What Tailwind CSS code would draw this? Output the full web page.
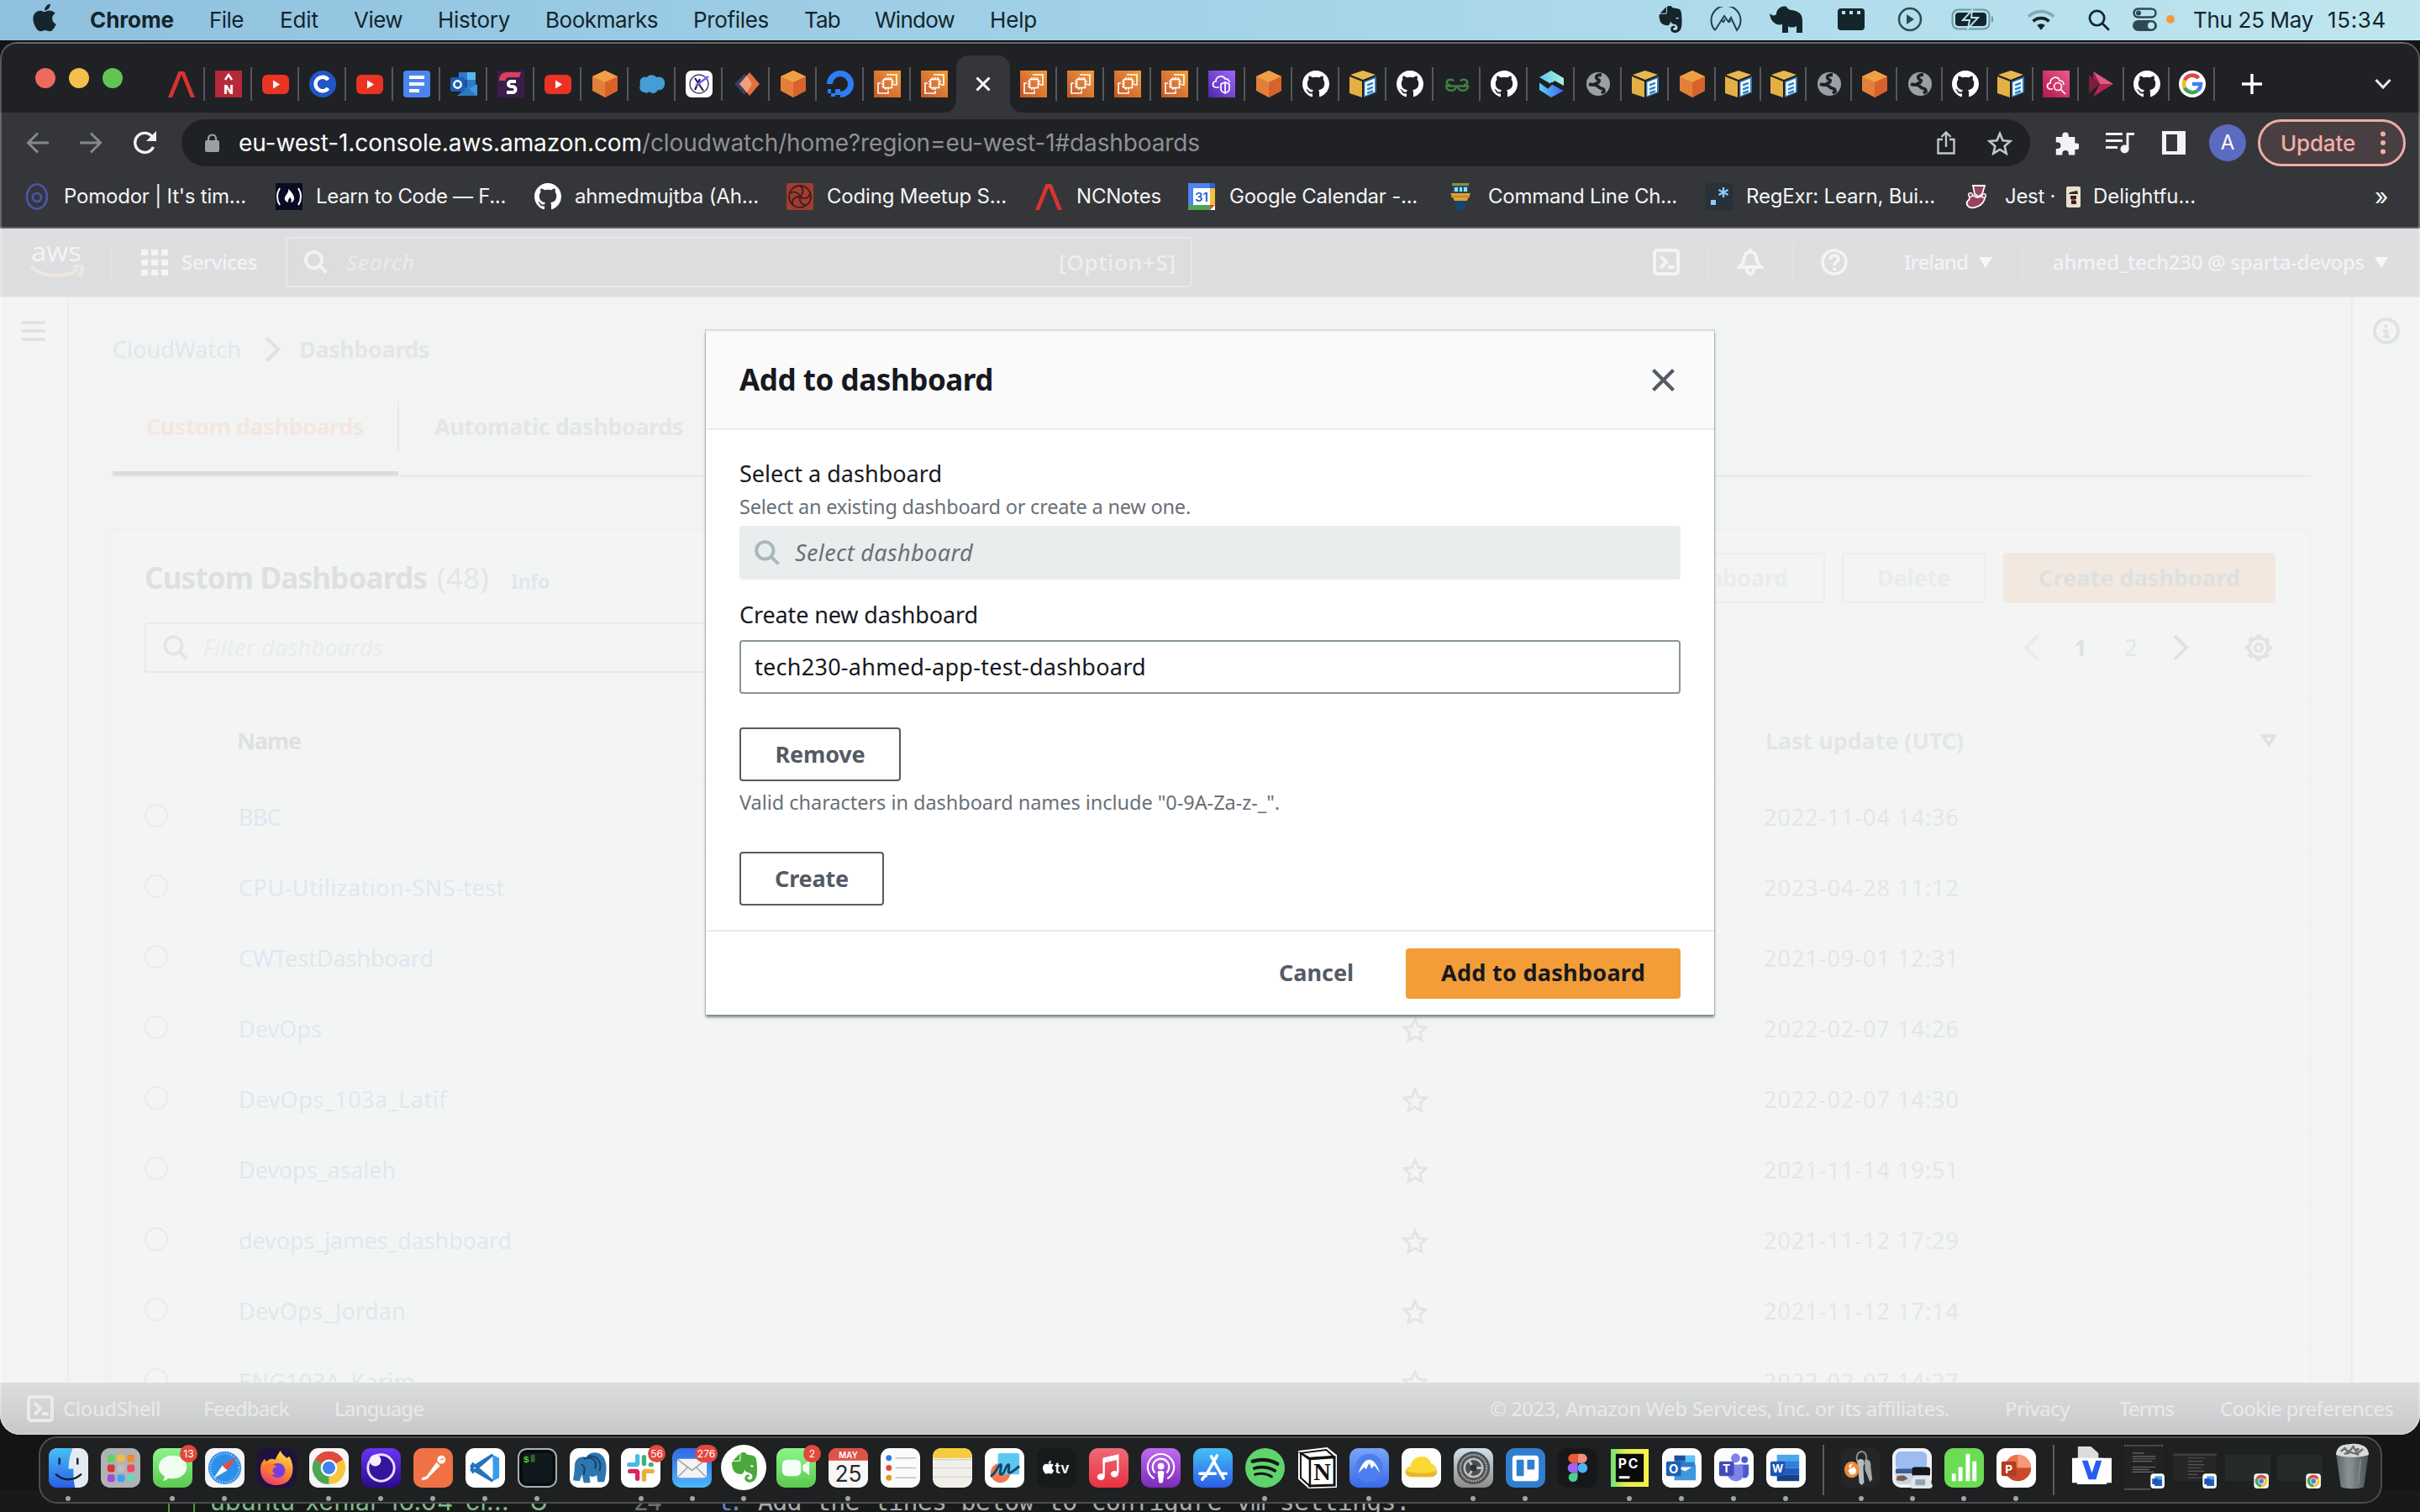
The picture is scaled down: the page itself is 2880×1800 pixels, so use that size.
<!DOCTYPE html>
<html lang="en">
<head>
<meta charset="utf-8">
<title>CloudWatch Dashboards</title>
<script src="https://cdn.jsdelivr.net/npm/@tailwindcss/browser@4"></script>
</head>
<body class="bg-[#131415] whitespace-nowrap">
<div class="relative w-[2880px] h-[1800px] overflow-hidden flex flex-col bg-[#131415] font-['Inter',sans-serif]">

  <!-- editor window behind the dock -->
  <div class="absolute left-0 bottom-0 w-full h-[26px] flex items-center text-[30px] font-['DejaVu_Sans_Mono',monospace] bg-[#181919]">
    <div class="ml-[200px] w-[32px] h-[26px] mt-2 border-2 border-[#4d9a3f]"></div>
    <span data-fit class="ml-[18px] w-[356px] text-[#7dbb8d] font-['Inter',sans-serif]">ubuntu-xenial-16.04-cl...</span>
    <span class="ml-[24px] w-[22px] text-[#7dbb8d] font-['Inter',sans-serif]">U</span>
    <span data-fit class="ml-[102px] w-[32px] text-[#6b6f76]">24</span>
    <span data-fit class="ml-[68px] w-[26px] text-[#5f86c4]">t.</span>
    <span data-fit class="ml-[22px] w-[776px] text-[#a9abad]">Add the lines below to configure vm settings:</span>
  </div>

  <!-- menu bar -->
  <header class="relative h-[48px] pb-[2px] flex items-center text-[26px] text-[#14252c] bg-linear-to-r from-[#8fc1df] via-[#a3d3e8] to-[#bfe6ef]">
    <svg class="ml-[39px] w-[28px] h-[34px] -mt-1" viewBox="0 20 384 470" fill="#14252c"><path d="M318.7 268.7c-.2-36.7 16.4-64.4 50-84.8-18.8-26.9-47.2-41.7-84.7-44.6-35.5-2.8-74.3 20.7-88.5 20.7-15 0-49.4-19.7-76.4-19.7C63.3 141.2 4 184.8 4 273.5q0 39.3 14.4 81.2c12.8 36.7 59 126.7 107.2 125.2 25.2-.6 43-17.9 75.8-17.9 31.8 0 48.3 17.9 76.4 17.9 48.6-.7 90.4-82.5 102.6-119.3-65.2-30.7-61.7-90-61.7-91.9zm-56.6-164.2c27.3-32.4 24.8-61.9 24-72.5-24.1 1.4-52 16.4-67.9 34.9-17.5 19.8-27.8 44.3-25.6 71.9 26.1 2 49.9-11.4 69.5-34.3z"/></svg>
    <span data-fit class="ml-[40px] w-[100px] font-bold">Chrome</span>
    <span data-fit class="ml-[42px] w-[41px]">File</span>
    <span data-fit class="ml-[43px] w-[46px]">Edit</span>
    <span data-fit class="ml-[42px] w-[58px]">View</span>
    <span data-fit class="ml-[42px] w-[86px]">History</span>
    <span data-fit class="ml-[42px] w-[134px]">Bookmarks</span>
    <span data-fit class="ml-[42px] w-[90px]">Profiles</span>
    <span data-fit class="ml-[42px] w-[43px]">Tab</span>
    <span data-fit class="ml-[41px] w-[95px]">Window</span>
    <span data-fit class="ml-[42px] w-[56px]">Help</span>
    <svg class="ml-[738px] w-[32px] h-[32px]" viewBox="0 0 24 24" fill="#14252c"><use href="#evernote"/></svg>
    <svg class="ml-[31px] w-[38px] h-[30px]" viewBox="0 0 38 30" fill="none" stroke="#24434e" stroke-width="2"><path d="M6 28A17.500 17.500 0 1 1 32 28L25 13l-3 5-5-7L6 28M13 16l3 2 2-3M22 18l3-1"/></svg>
    <svg class="ml-[32px] w-[42px] h-[34px]" viewBox="0 0 42 34" fill="#14252c"><path d="M1 10c3 3 6 3 8 1C9 5 15 0 21 2c2 3 4 4 6 4 8 1 13 4 13 12v15h-7v-8c-3 2-8 2-10 0v8h-7V23c-8 2-14-4-15-13z"/></svg>
    <svg class="ml-[40px] w-[32px] h-[26px]" viewBox="0 0 32 26"><rect width="32" height="26" rx="4" fill="#14252c"/><path d="M5 3h4v4H5zM14 3h4v4h-4zM23 3h4v4h-4z" fill="#b4deeb"/></svg>
    <svg class="ml-[39px] w-[30px] h-[30px]" viewBox="0 0 30 30"><circle cx="15" cy="15" r="13" fill="none" stroke="#2d4a54" stroke-width="2.500"/><path d="M11 9l9 6-9 6z" fill="#2d4a54"/></svg>
    <svg class="ml-[34px] w-[52px] h-[26px]" viewBox="0 0 52 26"><rect x="1.500" y="1.500" width="44" height="23" rx="7" fill="none" stroke="#6e96a4" stroke-width="2"/><rect x="5" y="5" width="37" height="16" rx="4" fill="#14252c"/><path d="M25 2L14 14h8l-2 10 12-13h-8z" fill="#14252c" stroke="#b8e2ed" stroke-width="2"/><path d="M48 9c3 1 3 7 0 8z" fill="#6e96a4"/></svg>
    <svg class="ml-[38px] w-[34px] h-[25px]" viewBox="0 0 36 26" fill="none" stroke-width="4"><path d="M2 9a23 23 0 0 1 32 0" stroke="#7fabb9"/><path d="M8 15a14.500 14.500 0 0 1 20 0" stroke="#14252c"/><path d="M18 26l-5-6a7 7 0 0 1 10 0z" fill="#14252c" stroke="none"/></svg>
    <svg class="ml-[38px] w-[27px] h-[27px]" viewBox="0 0 28 28" fill="none" stroke="#14252c" stroke-width="2.800" stroke-linecap="round"><circle cx="12" cy="12" r="9"/><path d="M19 19l7 7"/></svg>
    <svg class="ml-[27px] w-[30px] h-[28px]" viewBox="0 0 30 28"><rect x="1.500" y="1.500" width="26" height="10" rx="5" fill="none" stroke="#2d4a54" stroke-width="2.500"/><circle cx="7" cy="6.500" r="3" fill="#2d4a54"/><rect y="15" width="29" height="13" rx="6.500" fill="#2d4a54"/><circle cx="22" cy="21.500" r="4" fill="#bce4ee"/></svg>
    <i class="ml-[10px] w-[10px] h-[10px] rounded-full bg-[#f19a38]"></i>
    <span data-fit class="ml-[22px] w-[143px]">Thu 25 May</span>
    <span data-fit class="ml-[17px] w-[70px]">15:34</span>
  </header>

  <!-- browser window -->
  <div class="relative mt-[2px] h-[1658px] rounded-t-[20px] rounded-b-[24px] overflow-hidden bg-[#35363a]">
    <div class="mt-[2px] h-[82px] pt-[14px] bg-[#202124] flex items-center">
      <div class="self-start mt-[15px] ml-[42px] flex gap-[16px]">
        <i class="w-[24px] h-[24px] rounded-full bg-[#ec6a5e]"></i><i class="w-[24px] h-[24px] rounded-full bg-[#f4bf4f]"></i><i class="w-[24px] h-[24px] rounded-full bg-[#61c554]"></i>
      </div>
      <div id="tabs" class="ml-[42px] flex items-center h-full"></div>
      <svg class="ml-[32px] w-[24px] h-[24px]" viewBox="0 0 24 24" stroke="#fff" stroke-width="3.400"><path d="M12 0v24M0 12h24"/></svg>
      <svg class="ml-[134px] w-[20px] h-[14px]" viewBox="0 0 20 14" fill="none" stroke="#e8eaed" stroke-width="3"><path d="M1.500 2l8.500 9 8.500-9"/></svg>
    </div>

    <div class="h-[64px] pt-[8px] flex items-center">
      <svg class="ml-[31px] w-[27px] h-[26px]" viewBox="0 0 27 26" fill="none" stroke="#86888a" stroke-width="3"><path d="M27 13H3M14 1.500L2.500 13 14 24.500"/></svg>
      <svg class="ml-[37px] w-[27px] h-[26px]" viewBox="0 0 27 26" fill="none" stroke="#86888a" stroke-width="3"><path d="M0 13h24M13 1.500L24.500 13 13 24.500"/></svg>
      <svg class="ml-[36px] w-[28px] h-[28px]" viewBox="0 0 28 28" fill="none" stroke="#f1f3f4" stroke-width="3.400"><path d="M24.500 19A11.500 11.500 0 1 1 23 6.500"/><path d="M28 0v12H16z" fill="#f1f3f4" stroke="none"/></svg>
      <div class="ml-[30px] w-[2200px] h-[56px] rounded-full bg-[#202124] flex items-center text-[28px]">
        <svg class="ml-[28px] w-[17px] h-[22px]" viewBox="0 0 17 22"><path d="M4 9V6a4.500 4.500 0 0 1 9 0v3" fill="none" stroke="#9aa0a6" stroke-width="2.200"/><rect y="8" width="17" height="14" rx="2" fill="#9aa0a6"/></svg>
        <span data-fit class="ml-[23px] w-[480px] text-white">eu-west-1.console.aws.amazon.com</span><span data-fit class="w-[664px] text-[#8e9194]">/cloudwatch/home?region=eu-west-1#dashboards</span>
        <svg class="ml-[877px] w-[22px] h-[28px]" viewBox="0 0 22 28" fill="none" stroke="#c4c7c9" stroke-width="2.400"><path d="M7 10H1.500v16.500h19V10H15M11 19V2M5.500 7L11 1.500 16.500 7"/></svg>
        <svg class="ml-[38px] w-[30px] h-[29px]" viewBox="0 0 30 29" fill="none" stroke="#c4c7c9" stroke-width="2.600"><path d="M15 3l3.500 8.200 9 .8-6.800 6 2 8.700L15 22l-7.700 4.700 2-8.700-6.800-6 9-.8z"/></svg>
      </div>
      <svg class="ml-[28px] w-[30px] h-[29px]" viewBox="0 0 32 30" fill="#f1f3f4"><path d="M3 7h8V5a4 4 0 0 1 8 0v2h8v8h2a4 4 0 0 1 0 8h-2v7h-8v-2a4 4 0 0 0-8 0v2H3v-8h2a4 4 0 0 0 0-8H3z"/></svg>
      <svg class="ml-[32px] w-[34px] h-[26px]" viewBox="0 0 34 26" fill="none" stroke="#f1f3f4" stroke-width="3"><path d="M0 2.500h20M0 10.500h20M0 18.500h14M26 21V2.500h8"/><circle cx="22.500" cy="20.500" r="5" fill="#f1f3f4" stroke="none"/></svg>
      <svg class="ml-[33px] w-[28px] h-[28px]" viewBox="0 0 28 28"><path fill="#f1f3f4" fill-rule="evenodd" d="M0 0h28v28H0zM5 4v20h13V4z"/></svg>
      <span class="ml-[28px] w-[44px] h-[44px] rounded-full bg-[#5c6bc0] text-white text-[24px] flex items-center justify-center">A</span>
      <div class="ml-[14px] w-[176px] h-[56px] rounded-full border-[3px] border-[#eeaca4] bg-[#493f42] text-[#f2aea6] text-[26px] flex items-center">
        <span data-fit class="ml-[24px] w-[89px] font-medium">Update</span>
        <svg class="ml-[30px] w-[6px] h-[28px]" viewBox="0 0 6 28" fill="#f2aea6"><circle cx="3" cy="3.500" r="3"/><circle cx="3" cy="14" r="3"/><circle cx="3" cy="24.500" r="3"/></svg>
      </div>
    </div>

    <div id="bookmarks" class="h-[72px] flex items-center text-[24px] text-[#f4f5f6]"></div>

    <!-- console page, dimmed by the open modal -->
    <div class="h-[1438px] border-t-2 border-[#5f6064] flex flex-col bg-[#f2f4f4] font-['Noto_Sans',sans-serif] text-[27px]">
      <nav class="h-[82px] bg-[#dddee0] border-b-2 border-[#e2e4e6] flex items-center text-[#f2f3f4] text-[24px] font-medium">
        <svg class="ml-[36px] w-[64px] h-[42px]" viewBox="0 0 64 42"><text x="1" y="20" font-family="Open Sans" font-size="31" font-weight="500" textLength="60" lengthAdjust="spacingAndGlyphs" fill="#f4f5f6">aws</text><path d="M1 27c18 13 40 13 56 3M51 27c5-2 10-1 11 0s-1 7-4 11" fill="none" stroke="#efe8df" stroke-width="4"/></svg>
        <i class="ml-[32px] w-[2px] h-[46px] bg-[#e1e2e4]"></i>
        <svg class="ml-[34px] w-[32px] h-[32px]" viewBox="0 0 32 32" fill="#f4f5f6"><path d="M0 1h8v7H0zM12 1h8v7h-8zM24 1h8v7h-8zM0 13h8v7H0zM12 13h8v7h-8zM24 13h8v7h-8zM0 25h8v7H0zM12 25h8v7h-8zM24 25h8v7h-8z"/></svg>
        <span data-fit class="ml-[16px] w-[90px]">Services</span>
        <div class="ml-[34px] w-[1079px] h-[60px] border-2 border-[#e7e8e8] rounded-[4px] bg-[#dcdddd] flex items-center">
          <svg class="ml-[20px] w-[28px] h-[28px]" viewBox="0 0 28 28" fill="none" stroke="#f1f2f2" stroke-width="4"><circle cx="11.500" cy="11.500" r="9.500"/><path d="M18 18l8.500 8.500"/></svg>
          <span data-fit class="ml-[22px] w-[82px] italic text-[#e9eaea] text-[26px]">Search</span>
          <span data-fit class="ml-auto mr-[17px] w-[140px] text-[#eeefef] text-[26px]">[Option+S]</span>
        </div>
        <svg class="ml-[548px] w-[32px] h-[32px]" viewBox="0 0 32 32" fill="none" stroke="#f3f4f5" stroke-width="4"><rect x="2" y="2" width="28" height="28" rx="3"/><path d="M9 9l7 7-7 7M18 22h8"/></svg>
        <i class="ml-[32px] w-[2px] h-[46px] bg-[#e1e2e4]"></i>
        <svg class="ml-[34px] w-[32px] h-[32px]" viewBox="0 0 32 32" fill="none" stroke="#f3f4f5" stroke-width="4"><path d="M3 22c5-4 5-8 6-12 1-5 4-6 7-6s6 1 7 6c1 4 1 8 6 12zM16 0v4M12 24c0 8 8 8 8 0"/></svg>
        <i class="ml-[34px] w-[2px] h-[46px] bg-[#e1e2e4]"></i>
        <svg class="ml-[32px] w-[32px] h-[32px]" viewBox="0 0 32 32" fill="none" stroke="#f3f4f5" stroke-width="3.600"><circle cx="16" cy="16" r="14"/><path d="M11 13c0-7 10-6 10-1 0 4-5 3-5 8M16 22.500v4"/></svg>
        <i class="ml-[31px] w-[2px] h-[46px] bg-[#e1e2e4]"></i>
        <span data-fit class="ml-[34px] w-[76px]">Ireland</span>
        <svg class="ml-[13px] w-[16px] h-[13px]" viewBox="0 0 16 13" fill="#f6f7f7"><path d="M0 0h16L8 13z"/></svg>
        <i class="ml-[35px] w-[2px] h-[46px] bg-[#e1e2e4]"></i>
        <span data-fit class="ml-[35px] w-[371px]">ahmed_tech230 @ sparta-devops</span>
        <svg class="ml-[12px] w-[16px] h-[13px]" viewBox="0 0 16 13" fill="#f6f7f7"><path d="M0 0h16L8 13z"/></svg>
      </nav>

      <div class="h-[1292px] flex overflow-hidden text-[#e4e6e6]">
        <aside class="w-[82px] border-r-2 border-[#ebeded] bg-[#f3f5f5] pl-[26px] pt-[28px]">
          <svg class="w-[28px] h-[25px]" viewBox="0 0 28 25" fill="#e2e4e4"><path d="M0 0h28v4H0zM0 10h28v4H0zM0 20h28v4H0z"/></svg>
        </aside>
        <main class="w-[2716px] pl-[50px]">
          <div class="h-[124px] pl-[2px] flex items-center">
            <span data-fit class="w-[153px] text-[#e0e7ef]">CloudWatch</span>
            <svg class="ml-[28px] w-[20px] h-[30px]" viewBox="0 0 20 30" fill="none" stroke="#e0e2e2" stroke-width="4"><path d="M2 1l14 14L2 29"/></svg>
            <span data-fit class="ml-[21px] w-[155px] font-bold">Dashboards</span>
          </div>
          <div class="w-[2618px] h-[90px] border-b-2 border-[#e8eaea] flex font-bold">
            <div class="w-[343px]">
              <div class="h-[60px] border-r-2 border-[#e8eaea] pl-[42px] flex items-center"><span data-fit class="w-[259px] text-[#f3e7df]">Custom dashboards</span></div>
              <div class="mt-[23px] ml-[2px] w-[340px] h-[5px] bg-[#dbdddd]"></div>
            </div>
            <div class="h-[60px] pl-[42px] flex items-center"><span data-fit class="w-[296px]">Automatic dashboards</span></div>
          </div>
          <section class="mt-[61px] w-[2618px] h-[1100px] border-x-2 border-t-2 border-[#eff1f1] bg-[#f3f5f5]">
            <div class="mt-[27px] h-[60px] flex items-center">
              <span data-fit class="ml-[38px] w-[336px] text-[35px] font-bold text-[#dee0e0]">Custom Dashboards</span>
              <span data-fit class="ml-[12px] w-[62px] text-[35px]">(48)</span>
              <span data-fit class="ml-[26px] mt-[8px] w-[46px] text-[23px] font-bold text-[#dfe6ef]">Info</span>
              <div class="ml-auto w-[320px] h-[60px] border-2 border-[#eceeee] rounded-[4px] flex items-center justify-end pr-[42px] font-bold text-[#eaecec]"><span data-fit class="w-[236px]">Add to dashboard</span></div>
              <div class="ml-[20px] w-[171px] h-[60px] border-2 border-[#eceeee] rounded-[4px] flex items-center justify-center font-bold text-[#eaecec]"><span data-fit class="w-[87px]">Delete</span></div>
              <div class="ml-[21px] mr-[40px] w-[324px] h-[60px] rounded-[4px] bg-[#f2e8e0] flex items-center justify-center font-bold text-[#dee0e0]"><span data-fit class="w-[240px]">Create dashboard</span></div>
            </div>
            <div class="mt-[23px] h-[60px] flex items-center">
              <div class="ml-[38px] w-[1000px] h-[60px] border-2 border-[#e8eaea] rounded-[4px] flex items-center">
                <svg class="ml-[20px] w-[30px] h-[30px]" viewBox="0 0 28 28" fill="none" stroke="#e4e6e6" stroke-width="3.600"><circle cx="11.500" cy="11.500" r="9.500"/><path d="M18 18l8.500 8.500"/></svg>
                <span data-fit class="ml-[18px] w-[214px] italic text-[#eaecec]">Filter dashboards</span>
              </div>
              <svg class="ml-auto w-[20px] h-[30px]" viewBox="0 0 20 30" fill="none" stroke="#e8eaea" stroke-width="3.600"><path d="M18 1L4 15l14 14"/></svg>
              <span class="ml-[39px] w-[20px] text-center font-bold text-[#dee0e0]">1</span>
              <span class="ml-[40px] w-[20px] text-center">2</span>
              <svg class="ml-[40px] w-[20px] h-[30px]" viewBox="0 0 20 30" fill="none" stroke="#e0e2e2" stroke-width="4"><path d="M2 1l14 14L2 29"/></svg>
              <i class="ml-[30px] w-[2px] h-[60px] bg-[#f0f2f2]"></i>
              <svg class="ml-[34px] mr-[44px] w-[32px] h-[32px]" viewBox="0 0 32 32" fill="none" stroke="#e1e3e3"><circle cx="16" cy="16" r="11.500" stroke-width="3.600"/><circle cx="16" cy="16" r="4.500" stroke-width="3.400"/><circle cx="16" cy="16" r="14.500" stroke-width="3" stroke-dasharray="5.700 5.690" stroke-dashoffset="2.850"/></svg>
            </div>
            <div class="mt-[31px] h-[98px] border-t-2 border-[#f1f3f3] flex items-center font-bold">
              <i class="ml-[106px] w-[2px] h-[48px] bg-[#f1f3f3]"></i>
              <span data-fit class="ml-[40px] w-[76px] text-[#dfe1e1]">Name</span>
              <i class="ml-[1701px] w-[2px] h-[48px] bg-[#f1f3f3]"></i>
              <span data-fit class="ml-[40px] w-[236px]">Last update (UTC)</span>
              <svg class="ml-[353px] w-[20px] h-[16px]" viewBox="0 0 20 16" fill="none" stroke="#dfe1e1" stroke-width="3.400"><path d="M3 2h14l-7 11z"/></svg>
            </div>
            <div id="rows"></div>
          </section>
        </main>
        <aside class="w-[82px] border-l-2 border-[#ebeded] bg-[#f3f5f5] pl-[24px] pt-[24px]">
          <svg class="w-[32px] h-[32px]" viewBox="0 0 32 32" fill="none" stroke="#e0e2e2" stroke-width="4"><circle cx="16" cy="16" r="14"/><path d="M15.500 8v4M12 16h4v7M12 23h8" stroke-width="3.600"/></svg>
        </aside>
      </div>

      <footer class="h-[62px] bg-linear-to-b from-[#dcdddd] to-[#c7c8ca] flex items-center text-[24px] text-[#e6e8e9] font-medium">
        <svg class="ml-[32px] w-[32px] h-[32px]" viewBox="0 0 32 32" fill="none" stroke="#e9ebec" stroke-width="4"><rect x="2" y="2" width="28" height="28" rx="3"/><path d="M9 9l7 7-7 7M18 22h8"/></svg>
        <span data-fit class="ml-[11px] w-[116px]">CloudShell</span>
        <span data-fit class="ml-[51px] w-[102px]">Feedback</span>
        <span data-fit class="ml-[54px] w-[106px]">Language</span>
        <span data-fit class="ml-[1269px] w-[547px]">© 2023, Amazon Web Services, Inc. or its affiliates.</span>
        <span data-fit class="ml-[66px] w-[77px]">Privacy</span>
        <span data-fit class="ml-[59px] w-[65px]">Terms</span>
        <span data-fit class="ml-[55px] w-[206px]">Cookie preferences</span>
      </footer>
    </div>
    <div class="absolute inset-0 rounded-t-[20px] rounded-b-[24px] border-2 border-b border-white/25"></div>
  </div>

  <!-- dock -->
  <div id="dock" class="relative mt-[2px] ml-[46px] w-[2789px] h-[80px] rounded-[22px] border-2 border-[#4b4d4e] bg-[#1e2021] flex pl-[2px]"></div>

  <!-- modal -->
  <div role="dialog" class="absolute left-[840px] top-[393px] w-[1200px] h-[815px] bg-white font-['Noto_Sans',sans-serif] text-[27px] text-[#16191f] shadow-[0_0_0_1px_rgba(120,130,140,0.3),0_3px_3px_rgba(0,28,36,0.5)] flex flex-col">
    <div class="h-[119px] bg-[#fafafa] border-t-2 border-b-2 border-[#eaeded] flex items-center px-[40px] justify-between">
      <span data-fit class="w-[302px] text-[35px] font-bold">Add to dashboard</span>
      <svg class="mr-[7px] w-[27px] h-[27px]" viewBox="0 0 27 27" stroke="#545b64" stroke-width="4.200"><path d="M1.500 1.500l24 24M25.500 1.500l-24 24"/></svg>
    </div>
    <div class="h-[597px] border-b-2 border-[#eaeded] px-[40px] pt-[32px] flex flex-col items-start">
      <span data-fit class="w-[241px] leading-[40px]">Select a dashboard</span>
      <span data-fit class="w-[537px] text-[23.500px] leading-[36px] text-[#687078] mt-[1px]">Select an existing dashboard or create a new one.</span>
      <div class="mt-[5px] w-[1120px] h-[64px] rounded-[4px] bg-[#eaeded] flex items-center">
        <svg class="ml-[18px] w-[30px] h-[30px]" viewBox="0 0 28 28" fill="none" stroke="#aab7b8" stroke-width="3.600"><circle cx="11.500" cy="11.500" r="9.500"/><path d="M18 18l8.500 8.500"/></svg>
        <span data-fit class="ml-[18px] w-[212px] italic text-[#687078]">Select dashboard</span>
      </div>
      <span data-fit class="mt-[22px] w-[284px] leading-[40px]">Create new dashboard</span>
      <div class="mt-[10px] w-[1120px] h-[64px] rounded-[4px] border-2 border-[#879596] flex items-center pl-[16px]"><span data-fit class="w-[466px]">tech230-ahmed-app-test-dashboard</span></div>
      <div class="mt-[40px] w-[192px] h-[64px] rounded-[4px] border-[2.500px] border-[#545b64] text-[#545b64] font-bold flex items-center justify-center"><span data-fit class="w-[107px]">Remove</span></div>
      <span data-fit class="mt-[7px] w-[643px] text-[23.500px] leading-[36px] text-[#687078]">Valid characters in dashboard names include "0-9A-Za-z-_".</span>
      <div class="mt-[41px] w-[172px] h-[64px] rounded-[4px] border-[2.500px] border-[#545b64] text-[#545b64] font-bold flex items-center justify-center"><span data-fit class="w-[88px]">Create</span></div>
    </div>
    <div class="h-[99px] flex items-center justify-end pr-[40px] font-bold">
      <span data-fit class="w-[89px] mr-[62px] text-[#545b64]">Cancel</span>
      <div class="w-[327px] h-[60px] rounded-[4px] bg-[#f29d38] flex items-center justify-center"><span data-fit class="w-[243px]">Add to dashboard</span></div>
    </div>
  </div>
</div>

<svg width="0" height="0" class="absolute">
  <defs>
    <linearGradient id="gOr" x1="0" y1="1" x2="1" y2="0"><stop offset="0" stop-color="#c4552d"/><stop offset="1" stop-color="#f29c3a"/></linearGradient>
    <linearGradient id="gPu" x1="0" y1="1" x2="1" y2="0"><stop offset="0" stop-color="#4d27a8"/><stop offset="1" stop-color="#a166ff"/></linearGradient>
    <linearGradient id="gPk" x1="0" y1="1" x2="1" y2="0"><stop offset="0" stop-color="#b0184d"/><stop offset="1" stop-color="#ee5a8b"/></linearGradient>
    <linearGradient id="gGreen" x1="0" y1="0" x2="0" y2="1"><stop offset="0" stop-color="#8df58b"/><stop offset="1" stop-color="#5ac94e"/></linearGradient>
    <linearGradient id="gBlue" x1="0" y1="0" x2="0" y2="1"><stop offset="0" stop-color="#46c0f8"/><stop offset="1" stop-color="#2a5ee8"/></linearGradient>
    <linearGradient id="gBlueR" x1="0" y1="0" x2="0" y2="1"><stop offset="0" stop-color="#3366e6"/><stop offset="1" stop-color="#4cb8f8"/></linearGradient>
    <linearGradient id="gMusic" x1="0" y1="0" x2="0" y2="1"><stop offset="0" stop-color="#ee6a78"/><stop offset="1" stop-color="#e8323f"/></linearGradient>
    <linearGradient id="gPod" x1="0" y1="0" x2="0" y2="1"><stop offset="0" stop-color="#c06cf0"/><stop offset="1" stop-color="#7b2bb8"/></linearGradient>
    <linearGradient id="gViolet" x1="0" y1="0" x2="0" y2="1"><stop offset="0" stop-color="#6a35f5"/><stop offset="1" stop-color="#2c0a8c"/></linearGradient>
    <linearGradient id="gNord" x1="0" y1="0" x2="0" y2="1"><stop offset="0" stop-color="#7ba4f8"/><stop offset="1" stop-color="#3a6ae8"/></linearGradient>
    <linearGradient id="gFox" x1="0.700" y1="0" x2="0.300" y2="1"><stop offset="0" stop-color="#ffe14a"/><stop offset="0.500" stop-color="#fb8a2e"/><stop offset="1" stop-color="#ec3a6c"/></linearGradient>
    <linearGradient id="gBin" x1="0" y1="0" x2="1" y2="0"><stop offset="0" stop-color="#5e6567"/><stop offset="0.400" stop-color="#8a9294"/><stop offset="1" stop-color="#4a5052"/></linearGradient>
    <linearGradient id="gLemon" x1="0" y1="0" x2="1" y2="0"><stop offset="0" stop-color="#6fe07a"/><stop offset="0.400" stop-color="#e6f04a"/><stop offset="1" stop-color="#f6f24a"/></linearGradient>
    <linearGradient id="gSteel" x1="0" y1="0" x2="0" y2="1"><stop offset="0" stop-color="#cfe0ec"/><stop offset="1" stop-color="#8d8c8a"/></linearGradient>
    <linearGradient id="gTop" x1="0" y1="0" x2="1" y2="0"><stop offset="0" stop-color="#5cc8f6"/><stop offset="1" stop-color="#a4f6da"/></linearGradient>
    <linearGradient id="gBot" x1="0" y1="0" x2="1" y2="0"><stop offset="0" stop-color="#5cd0f6"/><stop offset="1" stop-color="#3c60f4"/></linearGradient>
    <path id="evernote" d="M8.222 5.393c0 .239-.02.637-.256.895-.257.24-.652.259-.888.259H4.552c-.73 0-1.165 0-1.460.04-.159.02-.356.1-.455.14-.04.019-.04 0-.02-.02L8.380.796c.02-.02.04-.02.02.02-.04.099-.118.298-.138.457-.04.298-.04.736-.04 1.472v2.647zm5.348 17.869c-.67-.438-1.026-1.015-1.164-1.373a2.924 2.924 0 01-.217-1.095 3.007 3.007 0 013-3.004c.493 0 .888.398.888.895a.88.88 0 01-.454.776c-.099.06-.237.1-.336.12-.098.02-.473.06-.65.218-.198.16-.356.418-.356.697 0 .298.118.577.316.776.355.358.829.557 1.342.557a2.436 2.436 0 002.427-2.447c0-1.214-.809-2.290-1.875-2.766-.158-.08-.414-.14-.651-.2a8.040 8.040 0 00-.592-.1c-.829-.1-2.901-.755-3.040-2.605 0 0-.611 2.785-1.835 3.540-.118.06-.276.12-.454.16-.177.04-.374.06-.434.06-1.993.12-4.105-.517-5.565-2.030 0 0-.987-.815-1.500-3.103-.118-.558-.355-1.553-.493-2.488-.06-.338-.08-.597-.099-.836 0-.975.592-1.631 1.342-1.730h4.026c.69 0 1.086-.18 1.342-.42.336-.317.415-.775.415-1.312V1.354C9.050.617 9.703 0 10.669 0h.474c.197 0 .434.02.651.04.158.02.296.06.533.12 1.204.298 1.460 1.532 1.460 1.532s2.270.398 3.415.597c1.085.199 3.770.378 4.282 3.104 1.204 6.487.474 12.775.415 12.775-.849 6.129-5.901 5.830-5.901 5.830a4.100 4.100 0 01-2.428-.736zm4.540-13.034c-.652-.06-1.204.2-1.402.697-.04.1-.079.219-.059.278.02.06.06.08.099.1.237.12.631.179 1.204.239.572.06.967.1 1.223.06.04 0 .08-.02.119-.08.039-.06.02-.18.02-.28-.06-.536-.553-.934-1.204-1.014z"/>
  </defs>
</svg>

<script>
const chromeLogo = `<circle cx="16" cy="16" r="15" fill="#fff"/><path d="M16 16L3 8.500A15 15 0 0 1 29 8.500z" fill="#dd4b3e"/><path d="M16 16L29 8.500A15 15 0 0 1 16 31z" fill="#f8c63d"/><path d="M16 16v15A15 15 0 0 1 3 8.500z" fill="#4da653"/><circle cx="16" cy="16" r="7.500" fill="#fff"/><circle cx="16" cy="16" r="5.800" fill="#4480ee"/>`;
// Favicons, 32 x 32
const F = {
  nc: `<path d="M0 32L12.500 1h7L32 32h-5L16 5 5 32z" fill="#d8342f"/>`,
  an: `<path fill="#b5293a" d="M0 0h32v32H0z"/><path d="M12 11l4-6 4 6" fill="none" stroke="#fff" stroke-width="2.500"/><text x="16" y="28" text-anchor="middle" font-family="Inter" font-weight="800" font-size="15" fill="#fff">N</text>`,
  yt: `<rect y="5" width="32" height="23" rx="6" fill="#eb3323"/><path d="M13 11.500l8 5-8 5z" fill="#fff"/>`,
  c: `<circle cx="16" cy="16" r="16" fill="#2256c8"/><path d="M22.500 11a8.300 8.300 0 1 0 0 10" fill="none" stroke="#fff" stroke-width="4.500"/>`,
  doc: `<rect width="32" height="32" rx="4" fill="#4d83ed"/><path d="M7 6h18v4H7zM7 14h18v4H7zM7 22h12v4H7z" fill="#fff"/>`,
  out: `<path fill="#2d7cc9" d="M10 2h20v22H10z"/><path fill="#54b6ee" d="M20 2h10v9H20z"/><path fill="#1c4f9c" d="M10 11h10v9H10z"/><path fill="#3e97df" d="M8 30h24V16z"/><path fill="#2f78c4" d="M8 30l12-10 12 10z"/><rect y="8" width="17" height="17" rx="2" fill="#1a60b4"/><circle cx="8.500" cy="16.500" r="4.200" fill="none" stroke="#fff" stroke-width="2.400"/>`,
  s: `<path fill="#3a1d4a" d="M0 0h32v32H0z"/><path fill="#d9405b" d="M28 2H12C5 2 2 6 2 12h8c0-3 1-4 4-4h12z"/><path d="M22 13h-6a3 3 0 0 0 0 6h2a3.500 3.500 0 0 1 0 7h-7" fill="none" stroke="#fff" stroke-width="4"/>`,
  cube: `<path d="M16 0l15 7v17l-15 8-15-8V7z" fill="#e2803a"/><path d="M16 0l15 7-15 7L1 7z" fill="#f0a044"/><path d="M31 7v17l-15 8V14z" fill="#d8622c"/>`,
  sf: `<path d="M7 26a6 6 0 0 1-5-9C0 10 5 6 10 8c3-4 9-3 11 0 6-2 11 2 10 8 0 5-4 8-8 7-2 5-8 5-10 2-2 2-4 2-6 1z" fill="#459cd8"/>`,
  x: `<rect width="32" height="32" rx="7" fill="#fff"/><circle cx="16" cy="16" r="11" fill="none" stroke="#4b4a78" stroke-width="1.500"/><path d="M11 9l10 15M17 10l-6 13" stroke="#22224a" stroke-width="2.200"/><path d="M27 7L12 18" stroke="#7a5cff" stroke-width="2.600"/>`,
  git: `<path d="M14 4L2 16l12 13 3-4-8-9 8-9z" fill="#38406a"/><path d="M20 2l12 14-12 14L8 16z" fill="#e2703e"/><path d="M17 6l-9 10 9 10 6-10z" fill="#f0a07c"/>`,
  do: `<path d="M16 28.500A12.500 12.500 0 1 0 3.500 16" fill="none" stroke="#2f7df6" stroke-width="7"/><path d="M10 22h6v7h-6zM5 27h5v4H5zM1 22h4v5H1z" fill="#2f7df6"/>`,
  ec2: `<path fill="url(#gOr)" d="M0 0h32v32H0z"/><g fill="none" stroke="#fff" stroke-width="1.600"><rect x="11.500" y="10.500" width="10" height="10"/><path d="M14 8v3M17 8v3M20 8v3M14 20v3M17 20v3M9 13h3M9 16h3M9 19h3M21 13h3M21 16h3M15 5h12v12h-3M8 15H5v12h12v-3"/></g>`,
  vpc: `<path fill="url(#gPu)" d="M0 0h32v32H0z"/><g fill="none" stroke="#fff" stroke-width="1.700"><path d="M13 20H8c-4-2-3-7 1-7 0-7 9-8 11-3 4-1 5 3 5 4"/><path d="M15 16l5-2 5 2v6c0 3-5 5-5 5s-5-2-5-5zM20 14v13"/></g>`,
  gh: `<g transform="scale(2)"><path fill="#fff" d="M8 0C3.580 0 0 3.580 0 8c0 3.540 2.290 6.530 5.470 7.590.4.07.55-.17.55-.38 0-.19-.01-.82-.01-1.490-2.010.37-2.530-.49-2.690-.94-.09-.23-.48-.94-.82-1.130-.28-.15-.68-.52-.01-.53.63-.01 1.080.58 1.230.82.72 1.210 1.870.87 2.330.66.07-.52.28-.87.51-1.070-1.780-.2-3.640-.89-3.640-3.950 0-.87.31-1.590.82-2.150-.08-.2-.36-1.020.08-2.120 0 0 .67-.21 2.200.82.64-.18 1.320-.27 2-.27s1.360.09 2 .27c1.530-1.040 2.200-.82 2.200-.82.44 1.100.16 1.920.08 2.120.51.56.82 1.270.82 2.150 0 3.070-1.870 3.750-3.650 3.950.29.25.54.73.54 1.480 0 1.070-.01 1.930-.01 2.200 0 .21.15.46.55.38A8.010 8.010 0 0016 8c0-4.420-3.580-8-8-8z"/></g>`,
  box: `<path d="M0 7l15 6v19L0 27z" fill="#e3b143"/><path d="M16 0l15 5-15 6L1 5z" fill="#e6b84e"/><path d="M17 13l15-6v19l-15 6z" fill="#3279b8"/><path d="M18.500 14L30 9.500v16L18.500 30z" fill="#fff"/><path d="M21 17.500l7-2.700M21 22.500l7-2.700M21 27l7-2.700" stroke="#2f87cf" stroke-width="2.600"/><path d="M16 12v20" stroke="#1d1a12" stroke-width="1.500"/>`,
  gfg: `<g fill="none" stroke="#3f7f45" stroke-width="2.600"><path d="M12 12.500C11 10 5 10 4 13s1 4 4 4M2 18.500h13c0 7-12 7-12 0zM20 12.500c1-2.500 7-2.500 8 .5s-1 4-4 4M30 18.500H17c0 7 12 7 12 0z"/></g>`,
  sl: `<path d="M16 0l15 9v9L20 12l-4 4-14-8z" fill="url(#gTop)"/><path d="M16 32L2 23v-9l10 7 5-5 14 8z" fill="url(#gBot)"/><path d="M2 13l10 7 5-5 13 7" stroke="#202124" stroke-width="2.600" fill="none"/>`,
  globe: `<circle cx="16" cy="16" r="14" fill="#9aa0a6"/><path d="M14.500 7.500c1-2 4-2.500 6-3C14 2.500 9 5 7 8c-3 4-3 7-2.500 9H10c2 0 4 2 4 3.500s2 1 2 3v4c8 1 11-4 11.500-8l-4-1c-2 0-3-1-4-2h-4c-1 0-2-1-2-2s1-2 3-2c3 0 4-2 2-3-1 0-2 1-3 0s0-1 -1-2z" fill="#202124" opacity="0"/><path d="M20 5c-4 0-7 1-6 4s4 1 3 4-5 1-5 4c-3 0-5 0-7-1M12 17c4 0 3 3 7 4 3 1 4 1 4 4l-3 2" fill="none" stroke="#202124" stroke-width="3.800"/>`,
  cw: `<path fill="url(#gPk)" d="M0 0h32v32H0z"/><g fill="none" stroke="#fff" stroke-width="1.700"><path d="M12 22H8c-4-2-3-7 1-7 0-8 10-9 11-3 5 0 5 3 5 5"/><circle cx="18" cy="19" r="4.500"/><path d="M21.500 22.500L27 28"/></g>`,
  pk: `<path d="M6 1l24 15H14z" fill="#e05a84"/><path d="M30 16L6 31l8-15z" fill="#b5264f"/><path d="M1 5l13 11L1 27z" fill="#7a1e3c"/><path d="M6 1v8l8 7z" fill="#9a2448"/>`,
  g: `<circle cx="16" cy="16" r="16" fill="#fff"/><g fill="none" stroke-width="4.600"><path d="M23.500 9A10 10 0 0 0 7 11.500" stroke="#e04a3d"/><path d="M7 11.500a10 10 0 0 0 0 9" stroke="#f3b92e"/><path d="M7 20.500A10 10 0 0 0 22 24" stroke="#3fa357"/><path d="M22 24a10 10 0 0 0 4-8H16" stroke="#4480ee"/></g>`,
  pomo: `<g fill="none" stroke="#4a56a8" stroke-width="2.600"><path d="M16 1.500c8 0 12 8 12 15s-5 14-12 14S4 24 4 16.500s4-15 12-15z"/><circle cx="16" cy="17" r="5"/></g>`,
  fcc: `<path fill="#0a0a23" d="M0 0h32v32H0z"/><path d="M5 6c-4 6-4 14 0 20M27 6c4 6 4 14 0 20" fill="none" stroke="#fff" stroke-width="2"/><path d="M15 7c5 4 7 8 7 11s-2 5-4 5c2-3 0-5-1-6-1 2-3 3-2 6-3-1-5-4-4-6 1-4 5-5 4-10z" fill="#fff"/>`,
  code: `<rect width="32" height="32" rx="2" fill="#a33b30"/><g fill="none" stroke="#3a201e" stroke-width="1.800"><circle cx="16" cy="16" r="13"/><path d="M16 3c5 4 4 10 0 13M28 12c-1 6-7 8-12 4M24 26c-6 1-9-4-8-10M8 26c-3-5 1-10 8-10M4 12c5-3 11-1 12 4"/></g>`,
  gcal: `<path fill="#fff" d="M0 0h32v32H0z"/><path fill="#4d83ed" d="M0 0h26v6H6v20H0z"/><path fill="#2c63c8" d="M26 0h6v6h-6z"/><path fill="#f3bf3c" d="M26 6h6v20h-6z"/><path fill="#4da653" d="M0 26h26v6H0z"/><path fill="#e0483c" d="M26 26h6l-6 6z"/><text x="16" y="22" text-anchor="middle" font-family="Inter" font-weight="600" font-size="15" fill="#2c63c8">31</text>`,
  tower: `<path fill="#8a9434" d="M6 0h20v3H6z"/><path fill="#1d5579" d="M7 3h18v8H7z"/><path fill="#8fe0ee" d="M9 5h4v5H9zM15 5h3v5h-3zM20 5h4v5h-4z"/><path fill="#dba437" d="M4 12h24l-4 9H9z"/><path fill="#c9842b" d="M5 15h22v2H5z"/><path fill="#15466b" d="M10 21h12v11H10z"/>`,
  rx: `<path fill="#28303a" d="M0 0h32v32H0z"/><path fill="#8ec8ff" d="M6 20h6v6H6z"/><path d="M21 5v12M15.500 8l11 6M26.500 8l-11 6" stroke="#8ec8ff" stroke-width="2.400"/>`,
  jest: `<path d="M10 3h14l-3 10-4 3-5-3z" fill="#99425b" stroke="#fff" stroke-width="1.800"/><path d="M6 14c3-2 5 2 9 3 3 0 5-2 8-2 3 4-2 12-11 14-8 2-12-5-7-9 2-2 0-4 1-6z" fill="#99425b" stroke="#fff" stroke-width="1.800"/><circle cx="7" cy="14" r="2.400" fill="#99425b" stroke="#fff" stroke-width="1.300"/><circle cx="23" cy="15" r="2.400" fill="#99425b" stroke="#fff" stroke-width="1.300"/>`,
};
const tab = (k, cls) => `<div class="${cls}"><svg class="w-[32px] h-[32px]" viewBox="0 0 32 32">${F[k]}</svg></div>`;
const wide = 'w-[56px] h-[40px] pl-[2px] border-r-2 border-[#56585b] flex items-center justify-center';
const wideLast = 'w-[54px] h-[40px] pl-[2px] flex items-center justify-center';
const slim = 'w-[54px] h-[40px] pl-[1px] border-r-2 border-[#56585b] flex items-center justify-center';
document.getElementById('tabs').innerHTML =
  'nc an yt c yt doc out s yt cube sf x git cube do ec2'.split(' ').map(k => tab(k, wide)).join('') + tab('ec2', wideLast) +
  `<div class="w-[64px] h-full flex items-center justify-center"><svg class="w-[96px] h-[68px] -mx-[16px] shrink-0" viewBox="0 0 96 68"><path d="M0 68c12 0 16-8 16-16V16C16 6 22 0 32 0h32c10 0 16 6 16 16v36c0 8 4 16 16 16z" fill="#35363a"/><path d="M40.500 26.500l15 15M55.500 26.500l-15 15" stroke="#fff" stroke-width="3"/></svg></div>` +
  'ec2 ec2 ec2 ec2 vpc cube gh box gh gfg gh sl globe box cube'.split(' ').map(k => tab(k, wide)).join('') +
  'box box globe cube globe gh box cw pk gh g'.split(' ').map(k => tab(k, slim)).join('');

const bm = (k, ml, gap, w, t) => `<svg class="${ml} w-[32px] h-[32px]" viewBox="0 0 32 32">${F[k]}</svg><span data-fit class="${gap} ${w}">${t}</span>`;
document.getElementById('bookmarks').innerHTML =
  bm('pomo', 'ml-[28px]', 'ml-[16px]', 'w-[217px]', "Pomodor | It's tim...") +
  bm('fcc', 'ml-[35px]', 'ml-[16px]', 'w-[226px]', 'Learn to Code — F...') +
  bm('gh', 'ml-[34px]', 'ml-[16px]', 'w-[219px]', 'ahmedmujtba (Ah...') +
  bm('code', 'ml-[33px]', 'ml-[16px]', 'w-[214px]', 'Coding Meetup S...') +
  bm('nc', 'ml-[34px]', 'ml-[17px]', 'w-[101px]', 'NCNotes') +
  bm('gcal', 'ml-[32px]', 'ml-[17px]', 'w-[224px]', 'Google Calendar -...') +
  bm('tower', 'ml-[35px]', 'ml-[17px]', 'w-[225px]', 'Command Line Ch...') +
  bm('rx', 'ml-[34px]', 'ml-[16px]', 'w-[225px]', 'RegExr: Learn, Bui...') +
  bm('jest', 'ml-[35px]', 'ml-[16px]', 'w-[60px]', 'Jest ·') +
  `<svg class="ml-[13px] w-[17px] h-[25px]" viewBox="0 0 17 25"><rect width="17" height="25" rx="2" fill="#e9dfcf"/><path d="M4 7l9-2 1 4H3zM5 11h7v4H5zM6 17h6v4H6z" fill="#2a2626"/><path d="M6 15h5v2H6z" fill="#c0473e"/></svg>
   <span data-fit class="ml-[15px] w-[122px]">Delightfu...</span><span class="ml-[213px] text-[28px]">»</span>`;

const rows = [
  ['BBC', 'w-[50px]', '2022-11-04 14:36'], ['CPU-Utilization-SNS-test', 'w-[317px]', '2023-04-28 11:12'],
  ['CWTestDashboard', 'w-[232px]', '2021-09-01 12:31'], ['DevOps', 'w-[99px]', '2022-02-07 14:26'],
  ['DevOps_103a_Latif', 'w-[248px]', '2022-02-07 14:30'], ['Devops_asaleh', 'w-[187px]', '2021-11-14 19:51'],
  ['devops_james_dashboard', 'w-[325px]', '2021-11-12 17:29'], ['DevOps_Jordan', 'w-[199px]', '2021-11-12 17:14'],
  ['ENG103A_Karim', 'w-[210px]', '2022-02-07 14:27'],
];
document.getElementById('rows').innerHTML = rows.map(([n, w, d]) => `
  <div class="h-[84px] border-t-2 border-[#f1f3f3] flex items-center">
    <i class="ml-[38px] -mt-[4px] w-[28px] h-[28px] rounded-full border-2 border-[#e9ebeb]"></i>
    <div class="ml-[84px] w-[1383px] flex text-[#e0e7ef]"><span data-fit class="${w}">${n}</span></div>
    <svg class="w-[34px] h-[32px]" viewBox="0 0 34 32" fill="none" stroke="#e3e5e5" stroke-width="3"><path d="M17 4l4 9 9 1-7 6.500 2 9-8-4.500-8 4.500 2-9L4 14l9-1z"/></svg>
    <span data-fit class="ml-[398px] w-[233px]">${d}</span>
  </div>`).join('');

// Dock icons, 48 x 48
const R = (fill) => `<rect width="48" height="48" rx="11" fill="${fill}"/>`;
const D = {
  finder: R('#e4eaf2') + `<path d="M11 0h18c-3 8-5 16-5 25h6c0 8 0 15 2 23H11C4 48 0 44 0 37V11C0 4 4 0 11 0z" fill="url(#gBlue)"/><path d="M13 13v6M35 13v6M9 32c9 8 21 8 30 0" fill="none" stroke="#15212f" stroke-width="2.500" stroke-linecap="round"/>`,
  launch: R('#b0b2b6') + [['#5fd35c', 8, 8], ['#f0be3c', 20, 8], ['#f08a2c', 32, 8], ['#d03a30', 8, 20], ['#b9bdc0', 20, 20], ['#f04a62', 32, 20], ['#a44ad0', 8, 32], ['#3aa4f4', 20, 32], ['#6cd8b4', 32, 32]].map(([c, x, y]) => `<rect x="${x}" y="${y}" width="9" height="9" rx="2.500" fill="${c}"/>`).join(''),
  msg: R('url(#gGreen)') + `<path d="M24 9c10 0 17 6 17 14s-7 14-17 14c-2 0-3 0-5-.5-2 2-4 3-7 3 1-2 2-3 2-5.500C9 31 7 27 7 23 7 15 14 9 24 9z" fill="#f2fdf1"/>`,
  safari: R('#f5f5f7') + `<circle cx="24" cy="24" r="20" fill="#2f8fe8"/><circle cx="24" cy="24" r="17.500" fill="none" stroke="#bfe0fa" stroke-width="2" stroke-dasharray="1 2"/><path d="M38 11L27 27l-6-6z" fill="#ea4a3c"/><path d="M10 37l11-16 6 6z" fill="#f6f6f6"/>`,
  fox: R('#20123a') + `<path d="M28 3c3 5 5 6 8 9 2-1 3-2 3-2 8 12 6 34-14 35C10 46 1 34 5 19l4-6c1 2 2 3 3 3 2-3 6-4 10-2 2-5 4-7 6-11z" fill="url(#gFox)"/><circle cx="25" cy="27" r="9" fill="#7a3ce0"/><path d="M9 20c5-3 11-1 15 3-6 0-7 7-1 9-8 1-14-4-14-12z" fill="#fb7a30"/>`,
  chrome: R('#f6f6f6') + `<g transform="translate(2.500 2.500) scale(1.340)">${chromeLogo}</g>`,
  ecl: R('url(#gViolet)') + `<circle cx="24" cy="24" r="16" fill="#34159c" stroke="#e8e0fb" stroke-width="3"/><circle cx="17" cy="15" r="7" fill="#f4effe"/>`,
  post: R('#f07144') + `<path d="M10 37c3-3 3-1 6-3L28 17l5 4-14 14c-2 2-1 3-9 4z" fill="#fff"/><circle cx="34" cy="14" r="5" fill="#fff"/><path d="M27 15l7 7M33 14l4-1" stroke="#f07144" stroke-width="1.300"/>`,
  vsc: R('#fff') + `<path d="M33 8l8 4v24l-8 4z" fill="#3a9be8"/><path d="M33 8L9 29l-2-3 2-3zM33 40L9 19l-2 3 2 4z" fill="#2373bd" stroke="#2373bd" stroke-width="3"/><path d="M33 16v16L22 24z" fill="#fff"/>`,
  term: R('#aab4b6') + `<rect x="2" y="2" width="44" height="44" rx="9" fill="#0a0d0e"/><rect x="6" y="6" width="36" height="36" rx="5" fill="#101a1e"/><text x="7" y="17" font-family="Liberation Mono" font-weight="700" font-size="12" fill="#55c83e">$</text><path fill="#2c6a26" d="M16 8h5v9h-5z"/>`,
  ele: R('#fff') + `<path d="M6 22c0-10 8-13 14-11 6-9 20-7 23 4 3 8 1 18-1 26h-8l-1-8c-3 2-6 2-9 1l1 8h-8l-2-10-3 8-8-1c1-6 2-11 2-17z" fill="#2d76b0"/><path d="M17 13c10-4 17 2 14 12M22 10c12-2 18 8 14 18M14 20c4 1 5 6 3 12" fill="none" stroke="#173f66" stroke-width="2"/>`,
  slack: R('#fff') + `<g stroke-width="5.500" stroke-linecap="round"><path d="M20 10v9M10 20h9" stroke="#43bde4"/><path d="M28 11v8M37 20h-1" stroke="#3fb07c"/><path d="M28 38v-9M38 28h-9" stroke="#e5b13b"/><path d="M20 37v-8M11 28h8" stroke="#d8255c"/></g>`,
  mail: R('url(#gBlueR)') + `<rect x="6" y="13" width="36" height="23" rx="3" fill="#f3f3f3"/><path d="M7 14l17 13 17-13M7 35l12-12M41 35L29 23" fill="none" stroke="#a4a6a8" stroke-width="1.600"/>`,
  ever: `<circle cx="24" cy="24" r="24" fill="#fff"/><g transform="translate(9 8) scale(1.320)" fill="#4aa83c"><use href="#evernote"/></g>`,
  face: R('url(#gGreen)') + `<rect x="7" y="14" width="23" height="20" rx="6" fill="#f4fdf3"/><path d="M32 21l8-6v18l-8-6z" fill="#f4fdf3"/>`,
  cal: R('#f8f7f6') + `<path d="M0 15V11C0 4 4 0 11 0h26c7 0 11 4 11 11v4z" fill="#dc5347"/><text x="24" y="12" text-anchor="middle" font-family="Inter" font-weight="600" font-size="10" fill="#fff">MAY</text><text x="24" y="41" text-anchor="middle" font-family="Inter" font-size="27" fill="#2a2a2a">25</text>`,
  rem: R('#fbfbfa') + `<circle cx="10" cy="12" r="3.500" fill="#3478f0"/><circle cx="10" cy="24" r="3.500" fill="#e2473a"/><circle cx="10" cy="36" r="3.500" fill="#e8952e"/><path d="M18 12h25M18 24h25M18 36h25" stroke="#c2c2c2" stroke-width="1.500"/>`,
  notes: R('#f1efe9') + `<path d="M0 12v-1C0 4 4 0 11 0h26c7 0 11 4 11 11v1z" fill="#f5cb3f"/><path d="M0 14h48" stroke="#a8a49a" stroke-dasharray="1 1"/><path d="M0 24h48M0 35h48" stroke="#d4d1ca"/>`,
  free: R('#fff') + `<circle cx="19" cy="30" r="12" fill="#ee7b56"/><rect x="16" y="6" width="26" height="26" rx="2" fill="#5cc8f2"/><path d="M7 34c6-2 8-12 12-14 3 0-3 12 1 12s6-13 9-12c2 1-2 10 1 10s5-3 12-8" fill="none" stroke="#12466c" stroke-width="3"/>`,
  tv: R('#161c1c') + `<g transform="translate(7 14) scale(.036)" fill="#fff"><path d="M318.700 268.700c-.2-36.700 16.400-64.400 50-84.800-18.800-26.900-47.200-41.700-84.700-44.600-35.500-2.800-74.300 20.700-88.500 20.700-15 0-49.400-19.700-76.400-19.700C63.300 141.200 4 184.800 4 273.500q0 39.300 14.400 81.200c12.800 36.700 59 126.700 107.200 125.200 25.200-.6 43-17.900 75.800-17.900 31.800 0 48.300 17.900 76.400 17.900 48.600-.7 90.400-82.500 102.600-119.300-65.200-30.700-61.700-90-61.700-91.900zm-56.600-164.200c27.300-32.400 24.800-61.900 24-72.500-24.100 1.400-52 16.400-67.900 34.900-17.500 19.800-27.800 44.300-25.600 71.900 26.100 2 49.900-11.400 69.500-34.300z"/></g><text x="22" y="31" font-family="Inter" font-weight="600" font-size="18" fill="#fff">tv</text>`,
  music: R('url(#gMusic)') + `<path d="M18 13l17-4v21" fill="none" stroke="#fff" stroke-width="2.500"/><path d="M17 12l18-4v6l-18 4z" fill="#fff"/><path d="M18 13v21" stroke="#fff" stroke-width="2.500"/><ellipse cx="14.500" cy="35" rx="4.500" ry="4" fill="#fff"/><ellipse cx="31" cy="31.500" rx="4.500" ry="4" fill="#fff"/>`,
  pod: R('url(#gPod)') + `<g fill="none" stroke="#fff" stroke-width="2.200"><path d="M16 37a16 16 0 1 1 16 0"/><path d="M17 30a10 10 0 1 1 14 0"/></g><circle cx="24" cy="22" r="4" fill="#fff"/><path d="M20 29c1-2 7-2 8 0l-1.500 12c-1 2-4 2-5 0z" fill="#fff"/>`,
  app: R('url(#gBlue)') + `<path d="M22 10l3 5M29 9L15 34M25 16l12 21M8 31h19M33 31h7M13 35l-2 3" stroke="#fff" stroke-width="3.600" stroke-linecap="round"/>`,
  spot: `<circle cx="24" cy="24" r="24" fill="#5fd46c"/><g fill="none" stroke="#151616" stroke-linecap="round"><path d="M9 16c10-3 21-2 30 3" stroke-width="4.500"/><path d="M11 24.500c9-2.500 17-1.500 25 3" stroke-width="3.800"/><path d="M12 32c7-2 14-1 20 2.500" stroke-width="3.200"/></g>`,
  notion: `<path d="M2 4L36 0l11 9v38l-33 1L2 37z" fill="#fff" stroke="#fff" stroke-width="2" stroke-linejoin="round"/><path d="M4 6l31-4 9 8-29 2z" fill="#fff" stroke="#111" stroke-width="2"/><path d="M15 13l30-2v34l-30 1z" fill="#fff" stroke="#111" stroke-width="3"/><path d="M4 6l11 8v32L4 36z" fill="#fff" stroke="#111" stroke-width="2"/><text x="30" y="39" text-anchor="middle" font-family="Liberation Serif" font-weight="700" font-size="29" fill="#111">N</text>`,
  nord: R('url(#gNord)') + `<circle cx="24" cy="24" r="17" fill="#4d7ef0"/><path d="M11 30c2-6 6-16 13-16s11 10 13 16l-7-9-3 4-3-7-4 8-2-3z" fill="#fff"/>`,
  cloud: R('#fdfdfd') + `<path d="M13 35C2 35 3 23 11 22c1-14 22-16 25-3 9 2 9 16-1 16z" fill="#f9d935"/><path d="M13 35c-8 0-9-6-8-8 8 4 30 5 38 0 1 5-3 8-8 8z" fill="#e8b62c"/>`,
  set: R('url(#gSteel)') + `<circle cx="24" cy="24" r="20" fill="#4c4e50"/><circle cx="24" cy="24" r="16" fill="none" stroke="#a4a6a8" stroke-width="2.500" stroke-dasharray="2 1"/><circle cx="24" cy="24" r="11" fill="none" stroke="#bcbec0" stroke-width="2.500"/><path d="M24 24l12 0M24 24l-6-10M24 24l-6 10" stroke="#bcbec0" stroke-width="3"/><circle cx="24" cy="24" r="4" fill="#2e3032"/>`,
  trello: R('#2f7fd0') + `<rect x="8" y="9" width="32" height="31" rx="4" fill="#fff"/><rect x="13" y="14" width="9" height="20" rx="1" fill="#2f7fd0"/><rect x="26" y="14" width="9" height="12" rx="1" fill="#2f7fd0"/>`,
  figma: R('#17181a') + `<path d="M18 7h6v11h-6a5.500 5.500 0 0 1 0-11z" fill="#ee5a33"/><path d="M24 7h6a5.500 5.500 0 0 1 0 11h-6z" fill="#f58d7c"/><path d="M18 18h6v12h-6a6 6 0 0 1 0-12z" fill="#a065f6"/><circle cx="30" cy="24" r="6" fill="#4bb5f4"/><path d="M18 30h6v5.500a5.500 5.500 0 1 1-6-5.500z" fill="#4fcf8e"/>`,
  pc: `<path d="M1 1h46v46H1z" fill="url(#gLemon)"/><path d="M7 7h34v34H7z" fill="#0a0a0a"/><text x="10" y="24" font-family="Inter" font-weight="700" font-size="16" textLength="24" fill="#fff">PC</text><path d="M11 34h13v3H11z" fill="#fff"/>`,
  outl: R('#fdfdfd') + `<path fill="#2d7cc9" d="M15 9h25v14H15z"/><path fill="#5fc0f4" d="M28 9h12v8H28z"/><path fill="#1c4f9c" d="M15 9h13v6H15z"/><path fill="#3e97df" d="M15 39h26V20l-13 8-13-6z"/><rect x="5" y="16" width="18" height="18" rx="2" fill="#1a60b4"/><text x="14" y="31" text-anchor="middle" font-family="Inter" font-weight="700" font-size="15" fill="#fff">O</text>`,
  teams: R('#fdfdfd') + `<circle cx="26" cy="12" r="5.500" fill="#7b83eb"/><circle cx="37" cy="14" r="4" fill="#5059c9"/><path d="M31 20h11v10c0 8-9 8-11 2z" fill="#5059c9"/><path d="M16 20h19v12c0 12-17 10-19 0z" fill="#7b83eb"/><rect x="6" y="16" width="18" height="18" rx="2" fill="#454bb5"/><text x="15" y="30" text-anchor="middle" font-family="Inter" font-weight="700" font-size="14" fill="#fff">T</text>`,
  word: R('#fdfdfd') + `<path fill="#4fa4ec" d="M13 8h27v9H13z"/><path fill="#2f7fd8" d="M13 16h27v8H13z"/><path fill="#1f5bbd" d="M13 24h27v8H13z"/><path fill="#163f8a" d="M13 32h27v8H13z"/><rect x="5" y="16" width="18" height="18" rx="2" fill="#1c55b4"/><text x="14" y="30" text-anchor="middle" font-family="Inter" font-weight="700" font-size="13" fill="#fff">W</text>`,
  key: R('#252627') + `<ellipse cx="25" cy="12" rx="6" ry="8" fill="none" stroke="#8d8f90" stroke-width="2"/><path d="M20 15c3-3 7-2 8 1l-1 8 1 18-3 3-3-3z" fill="#b9bdbd"/><path d="M29 14c5-1 8 3 7 8l2 16-3 3-6-15z" fill="#a4a9a9"/><ellipse cx="13" cy="26" rx="9" ry="10" fill="#ee8a35"/><path d="M9 27l7-4 2 4-1 4-5 1zM11 25l-1-4 4-2" fill="#fff" stroke="#fff"/>`,
  prev: R('#f2f2f4') + `<rect x="4" y="4" width="38" height="22" rx="6" fill="#9dbcf0"/><path d="M4 25h38v6H4z" fill="#3e5f96"/><path d="M4 31h38v7q0 6-6 6H10q-6 0-6-6z" fill="#c8d4e2"/><path d="M6 34l8-1 5 4-6 3-8-1z" fill="#7a5f4c"/><rect x="24" y="23" width="22" height="11" rx="3" fill="#141617"/><path d="M26 33h18l5 13q-1 3-4 3H25q-3 0-4-3z" fill="#dfe6ea"/><path d="M28 38h12v7H28z" fill="#93a3b2"/>`,
  num: R('#6cdc55') + `<path d="M9 31h5v9H9zM17 23h5v17h-5zM26 7h5v33h-5zM34 16h5v24h-5z" fill="#fff"/>`,
  ppt: R('#fdfdfd') + `<circle cx="26" cy="24" r="16" fill="#e8734c"/><path d="M26 8a16 16 0 0 1 16 16H26z" fill="#f49a78"/><path d="M42 24a16 16 0 0 1-32 0z" fill="#c9492c"/><rect x="6" y="16" width="18" height="18" rx="2" fill="#b33b20"/><text x="15" y="31" text-anchor="middle" font-family="Inter" font-weight="700" font-size="14" fill="#fff">P</text>`,
  vdoc: `<path d="M7-2h16l9 8v6h6v8H4v-8h3z" fill="#dcdcdc"/><path d="M0 12h48v30h-6v2H6v-2H0z" fill="#fff"/><path d="M12 15h7l5 15 5-15h7l-7 23h-9z" fill="#2a5cf0"/>`,
  w1: `<path d="M0-4h48v55H0z" fill="#222222"/><path d="M0-3h48" stroke="#5a5a5a" stroke-width="2" stroke-dasharray="2 1"/><path d="M10 6h14M10 10h28M10 13h28M10 16h24M10 23h28M10 26h20M10 29h26M0 50h32" stroke="#6a6c6c" stroke-width="1.200"/>`,
  w2: `<path d="M-4 6h53v34H-4z" fill="#262626"/><path d="M14 12h20M14 16h18M14 20h20M14 24h16M14 28h20M14 32h12M14 36h18" stroke="#555" stroke-width="1.200"/><path d="M-4 8h53" stroke="#444" stroke-width="2"/>`,
  w3: `<path d="M-4 8h55v32H-4z" fill="#262a2a"/>`,
  bin: `<path d="M4 5h40l-6 42c-4 3-24 3-28 0z" fill="url(#gBin)"/><path d="M4 8C6-6 16-4 22-5s22 0 22 13c-8 4-32 4-40 0z" fill="#d8dad8"/><path d="M10 4l5-4 4 6 6-8 5 8 7-5M14 7l8-2 10 3" fill="none" stroke="#6d706c" stroke-width="2.500"/><path d="M18 2h3v3h-3z" fill="#4a7fc0"/><path d="M29 0h3v3h-3z" fill="#b04c3c"/><path d="M15 14l3 30M24 14v31M34 14l-3 30" stroke="#868e90" stroke-width="1.500"/>`,
};
const miniChrome = `<rect x="31" y="31" width="18" height="18" rx="4" fill="#f6f6f6"/><g transform="translate(32 32) scale(.5)">${chromeLogo}</g>`;
const miniWord = `<rect x="32" y="31" width="17" height="18" rx="4" fill="#fdfdfd"/><path fill="#4fa4ec" d="M37 34h9v4h-9z"/><path fill="#1f5bbd" d="M37 38h9v8h-9z"/><path fill="#1c55b4" d="M34 37h7v7h-7z"/>`;
const cell62 = 'relative w-[62px] h-full flex flex-col items-center';
const cell61 = 'relative w-[61px] h-full flex flex-col items-center';
const small = 'mt-[12px] w-[47px] h-[47px] overflow-visible', big = 'mt-[8px] w-[54px] h-[54px]';
const item = (art, dot, badge, cell = cell62, size = small) => `<div class="${cell}">
  <svg class="${size}" viewBox="0 0 48 48">${art}</svg>
  ${dot ? `<i class="${size === big ? 'mt-[7px]' : 'mt-[10px]'} w-[6px] h-[6px] rounded-full bg-[#a0a2a3]"></i>` : ''}
  ${badge ? `<b class="absolute top-0 ${badge.length > 2 ? 'right-[0px] w-[27px]' : 'right-[1px] w-[21px]'} mt-[8px] h-[21px] rounded-full bg-[#e2483c] text-white text-[12px] font-normal flex items-center justify-center">${badge}</b>` : ''}
</div>`;
const sep = `<div class="w-[28px] h-full pt-[8px] flex justify-center"><i class="w-[2px] h-[60px] bg-[#5a5c5d]"></i></div>`;
document.getElementById('dock').innerHTML =
  item(D.finder, 1) + item(D.launch) + item(D.msg, 1, '13') + item(D.safari, 1) + item(D.fox) + item(D.chrome, 1) + item(D.ecl, 1) + item(D.post, 1) + item(D.vsc, 1) + item(D.term, 1) + item(D.ele) +
  item(D.slack, 1, '56', cell61) + item(D.mail, 1, '276', cell61) + item(D.ever, 1, '', cell62, big) + item(D.face, 0, '2') + item(D.cal, 1) + item(D.rem) + item(D.notes) + item(D.free) + item(D.tv) + item(D.music) + item(D.pod) + item(D.app) +
  item(D.spot, 1) + item(D.notion) + item(D.nord, 1) + item(D.cloud) + item(D.set, 1) + item(D.trello, 1) + item(D.figma) + item(D.pc, 1) + item(D.outl, 1) + item(D.teams, 1) + item(D.word, 1) + sep +
  item(D.key, 1, '', cell61) + item(D.prev, 1, '', cell61) + item(D.num, 1) + item(D.ppt, 1) + sep +
  item(D.vdoc) + item(D.w1 + miniWord) + item(D.w2 + miniWord) + item(D.w3 + miniChrome) + item(D.w3 + miniChrome) + item(D.bin);

// Track each label so that it fills the width of its box
function fitLabels() {
  document.querySelectorAll('[data-fit]').forEach(el => {
    el.style.letterSpacing = '0px';
    const r = document.createRange();
    r.selectNodeContents(el);
    const w = el.getBoundingClientRect().width, n = r.getBoundingClientRect().width;
    el.style.letterSpacing = ((w - n) / el.textContent.length).toFixed(3) + 'px';
  });
}
fitLabels();
window.addEventListener('load', fitLabels);
document.fonts.ready.then(fitLabels);
setTimeout(fitLabels, 100);
</script>
</body>
</html>
